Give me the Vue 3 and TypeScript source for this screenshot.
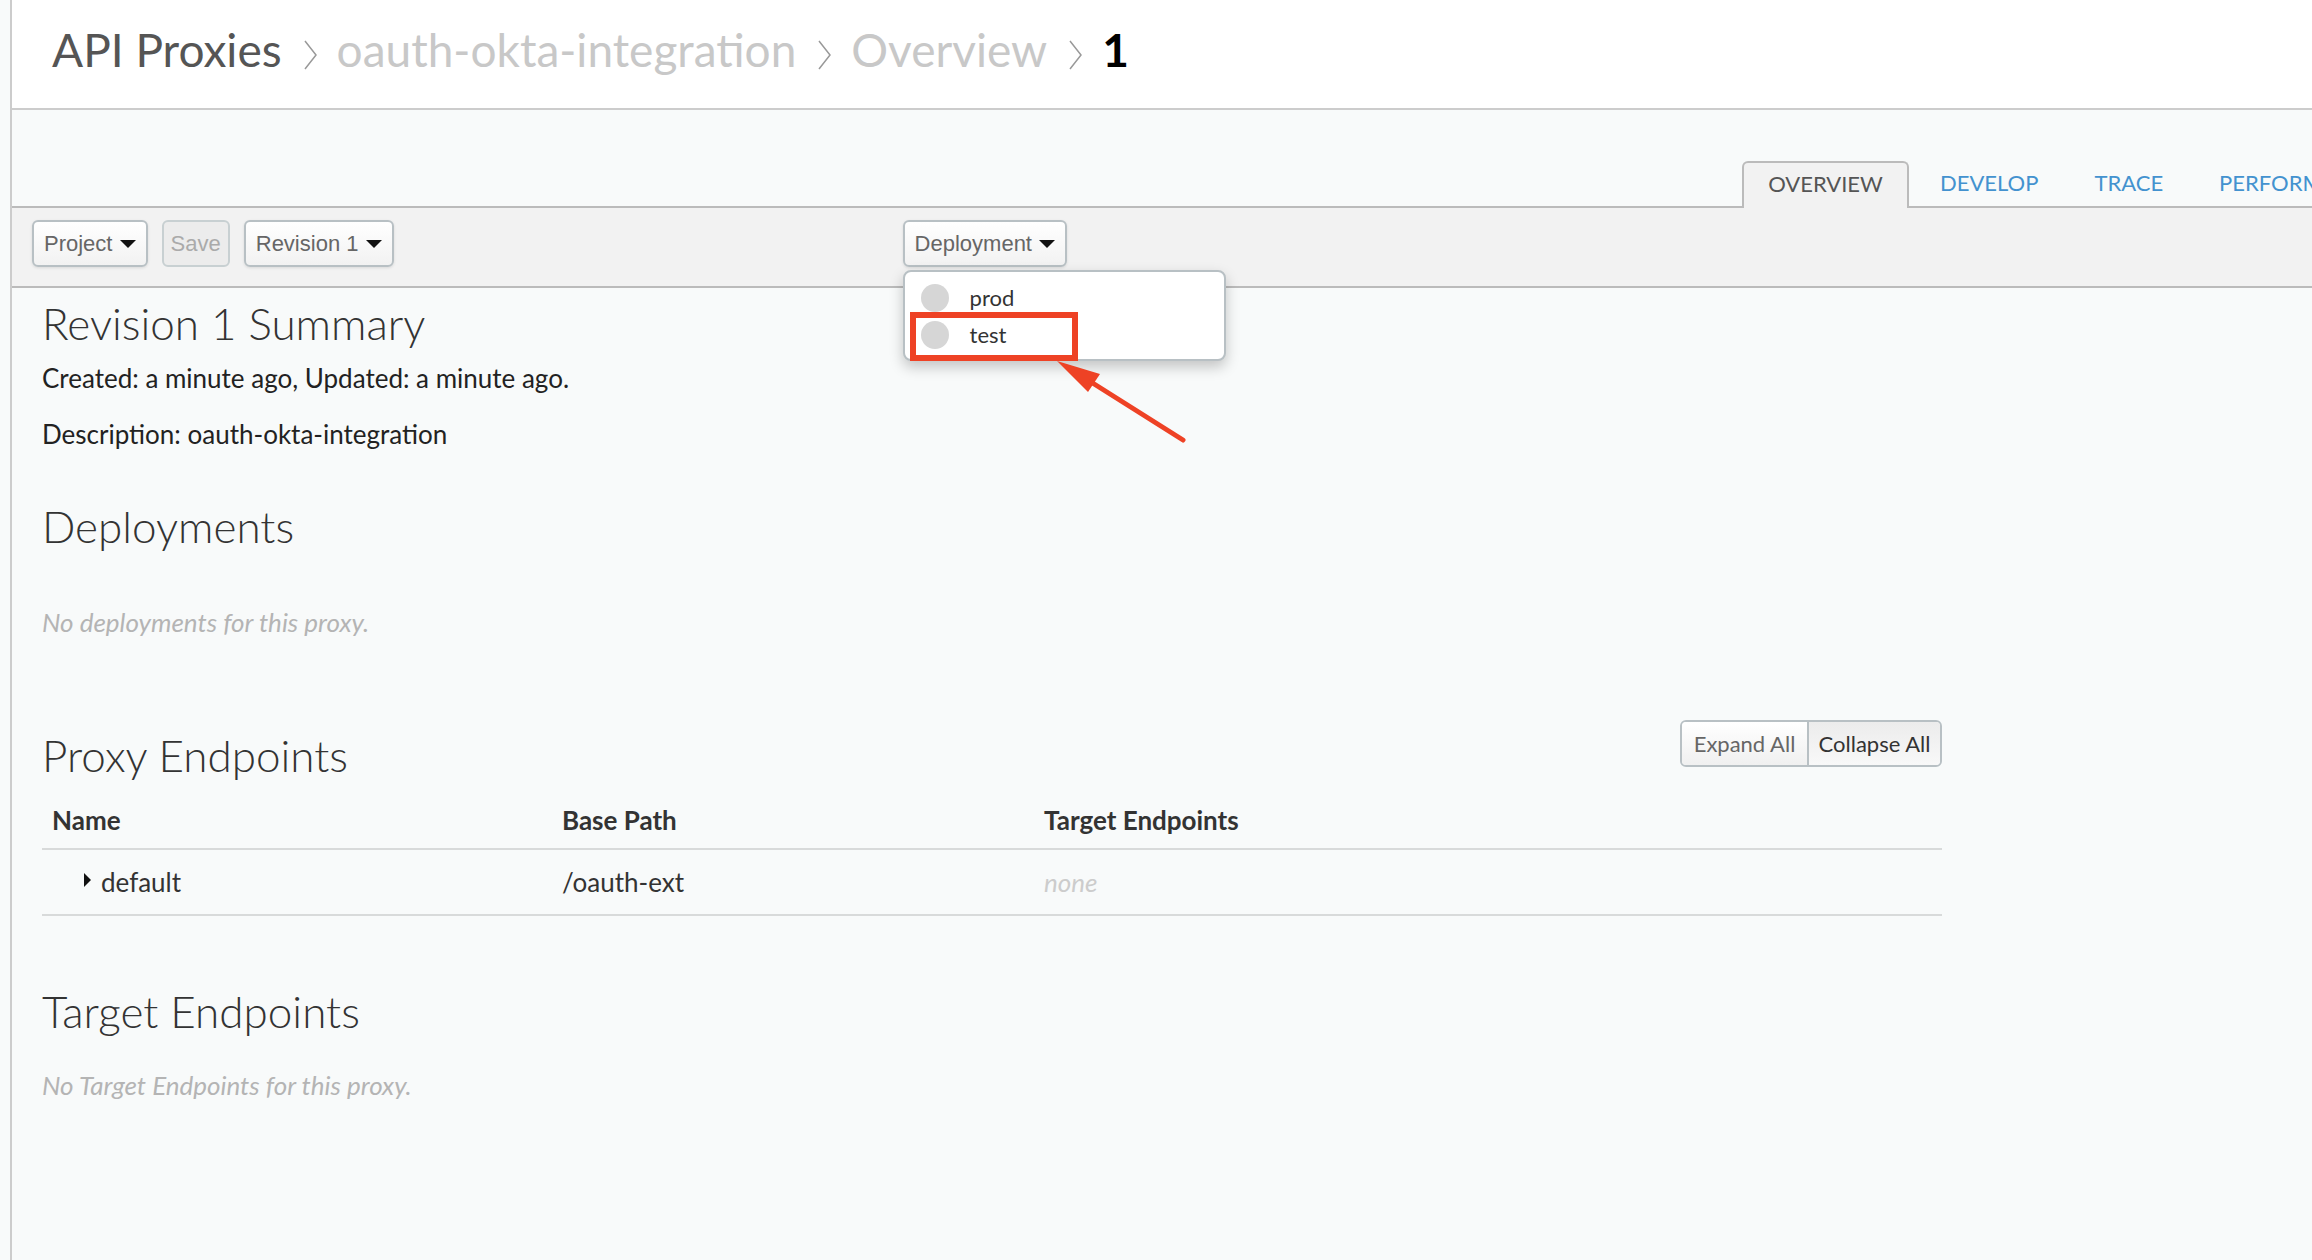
<script setup lang="ts">
const crumbs = ['oauth-okta-integration', 'Overview']
const tabs = ['OVERVIEW', 'DEVELOP', 'TRACE', 'PERFORMANCE']
const environments = ['prod', 'test']
</script>

<template>
  <div class="page">
    <header class="breadcrumb">
      <span class="crumb-root">API Proxies</span>
      <template v-for="crumb in crumbs" :key="crumb">
        <svg class="sep" width="13" height="30" viewBox="0 0 13 30"><path d="M1 1 L12 15 L1 29" fill="none" stroke="#999" stroke-width="1.5" /></svg>
        <span class="crumb">{{ crumb }}</span>
      </template>
      <svg class="sep" width="13" height="30" viewBox="0 0 13 30"><path d="M1 1 L12 15 L1 29" fill="none" stroke="#999" stroke-width="1.5" /></svg>
      <span class="crumb-current">1</span>
    </header>

    <nav class="tabs">
      <a v-for="(tab, i) in tabs" :key="tab" class="tab" :class="{ active: i === 0 }">{{ tab }}</a>
    </nav>

    <div class="toolbar">
      <button class="btn">Project <i class="caret"></i></button>
      <button class="btn disabled">Save</button>
      <button class="btn">Revision 1 <i class="caret"></i></button>
      <div class="deploy">
        <button class="btn">Deployment <i class="caret"></i></button>
        <ul class="menu">
          <li v-for="env in environments" :key="env"><span class="dot"></span>{{ env }}</li>
        </ul>
      </div>
    </div>

    <main class="content">
      <h2 class="summary-title">Revision 1 Summary</h2>
      <p class="meta">Created: a minute ago, Updated: a minute ago.</p>
      <p class="meta desc">Description: oauth-okta-integration</p>

      <h2 class="deploy-title">Deployments</h2>
      <p class="empty deploy-empty">No deployments for this proxy.</p>

      <div class="endpoints-head">
        <h2>Proxy Endpoints</h2>
        <div class="btn-group">
          <button>Expand All</button>
          <button class="dark">Collapse All</button>
        </div>
      </div>
      <div class="table">
        <div class="row head">
          <span class="name">Name</span>
          <span class="path">Base Path</span>
          <span>Target Endpoints</span>
        </div>
        <div class="row body">
          <span class="name"><i class="arrow"></i>default</span>
          <span class="path">/oauth-ext</span>
          <span class="none">none</span>
        </div>
      </div>

      <h2 class="target-title">Target Endpoints</h2>
      <p class="empty target-empty">No Target Endpoints for this proxy.</p>
    </main>

    <!-- annotation drawn over the screenshot -->
    <div class="highlight"></div>
    <svg class="pointer" width="140" height="90" viewBox="0 0 140 90">
      <polygon points="2,1 45,14 33,32" fill="#ee4225" />
      <line x1="36" y1="22" x2="128" y2="80" stroke="#ee4225" stroke-width="5" stroke-linecap="round" />
    </svg>
  </div>
</template>

<style>
html, body {
  margin: 0;
  background: #f8fafa;
}
</style>

<style scoped>
.page {
  position: relative;
  box-sizing: border-box;
  margin-left: 10px;
  width: 2302px;
  height: 1260px;
  border-left: 2px solid #ccc;
  background: #f8fafa;
  overflow: hidden;
  font-family: Lato, "Open Sans", sans-serif;
  color: #333;
}
.breadcrumb {
  display: flex;
  align-items: center;
  box-sizing: border-box;
  height: 110px;
  padding: 0 0 10px 40px;
  background: #fff;
  border-bottom: 2px solid #ccc;
  font-size: 46px;
  white-space: nowrap;
}
.crumb-root {
  color: #555;
}
.crumb {
  color: #c8c8c8;
}
.crumb-current {
  color: #000;
  font-weight: 700;
}
.sep {
  flex-shrink: 0;
  margin: 12px 20px 0 22px;
}
.tabs {
  display: flex;
  align-items: flex-end;
  height: 96px;
  padding-left: 1730px;
  white-space: nowrap;
}
.tab {
  flex-shrink: 0;
  height: 47px;
  line-height: 47px;
  font-size: 22px;
  color: #4392cf;
  margin-right: 56px;
}
.tab.active {
  box-sizing: border-box;
  width: 167px;
  margin-right: 31px;
  line-height: 41px;
  text-align: center;
  color: #555;
  background: #f2f2f2;
  border: 2px solid #bbb;
  border-bottom: 0;
  border-radius: 6px 6px 0 0;
  margin-bottom: -2px;
  position: relative;
}
.toolbar {
  display: flex;
  align-items: flex-start;
  gap: 14px;
  height: 78px;
  padding-left: 20px;
  background: #f2f2f2;
  border-top: 2px solid #bbb;
  border-bottom: 2px solid #bbb;
}
.btn {
  display: block;
  box-sizing: border-box;
  height: 47px;
  margin-top: 12px;
  padding: 0 10px;
  font: 22px "Liberation Sans", Arial, sans-serif;
  color: #666;
  background: linear-gradient(#fff, #f2f2f2);
  border: 2px solid #b8c0c4;
  border-radius: 6px;
  box-shadow: 0 1px 3px rgba(0, 0, 0, 0.1);
  white-space: nowrap;
}
.btn.disabled {
  padding: 0 7px;
  color: #aaa;
  background: #ececec;
  box-shadow: none;
  border-color: #c8d0d2;
}
.caret {
  display: inline-block;
  width: 0;
  height: 0;
  margin-left: 1px;
  vertical-align: 3px;
  border-left: 8px solid transparent;
  border-right: 8px solid transparent;
  border-top: 8px solid #111;
}
.deploy {
  position: relative;
  margin-left: 495px;
}
.menu {
  position: absolute;
  top: 62px;
  left: 0;
  z-index: 2;
  box-sizing: border-box;
  width: 323px;
  height: 91px;
  margin: 0;
  padding: 7px 0 0 16px;
  list-style: none;
  background: #fff;
  border: 2px solid #b8c0c4;
  border-radius: 8px;
  box-shadow: 0 6px 14px rgba(0, 0, 0, 0.22);
  font-size: 22px;
  color: #333;
}
.menu li {
  display: flex;
  align-items: center;
  height: 37px;
}
.dot {
  width: 28px;
  height: 28px;
  margin-right: 21px;
  border-radius: 50%;
  background: #d6d6d6;
}
.content {
  padding: 0 0 0 30px;
}
h2 {
  margin: 0;
  font-weight: 300;
  font-size: 44px;
  line-height: 50px;
  color: #333;
}
p {
  margin: 0;
}
.summary-title {
  margin-top: 10px;
}
.meta {
  font-size: 26px;
  line-height: 32px;
  color: #222;
}
.summary-title + .meta {
  margin-top: 14px;
}
.desc {
  margin-top: 24px;
}
.deploy-title {
  margin-top: 51px;
}
.empty {
  font-style: italic;
  font-size: 26px;
  line-height: 32px;
  color: #b4b4b4;
}
.deploy-empty {
  margin-top: 55px;
}
.endpoints-head {
  display: flex;
  justify-content: space-between;
  align-items: flex-start;
  width: 1900px;
  margin-top: 82px;
}
.endpoints-head h2 {
  margin-top: 10px;
}
.btn-group {
  display: flex;
  height: 47px;
  box-sizing: border-box;
  border: 2px solid #b8c0c4;
  border-radius: 6px;
  overflow: hidden;
}
.btn-group button {
  width: 125px;
  padding: 0;
  border: 0;
  font: 22px Lato, sans-serif;
  color: #666;
  background: linear-gradient(#fff, #f0f0f0);
}
.btn-group button.dark {
  width: 133px;
  color: #333;
  border-left: 2px solid #b8c0c4;
  background: linear-gradient(#ececec, #f8f8f8);
}
.table {
  width: 1900px;
  margin-top: 11px;
  font-size: 26px;
}
.row {
  display: flex;
  align-items: center;
  border-bottom: 2px solid #d8dada;
}
.row span:nth-child(3) {
  flex: 1;
}
.row.head {
  height: 57px;
  font-weight: 700;
  color: #333;
}
.row.body {
  height: 64px;
}
.name {
  width: 510px;
  padding-left: 10px;
}
.body .name {
  display: flex;
  align-items: center;
}
.arrow {
  width: 0;
  height: 0;
  margin: -4px 10px 0 32px;
  border-top: 7px solid transparent;
  border-bottom: 7px solid transparent;
  border-left: 7px solid #111;
}
.path {
  width: 482px;
}
.none {
  font-style: italic;
  color: #ccc;
}
.target-title {
  margin-top: 70px;
}
.target-empty {
  margin-top: 33px;
}
.highlight {
  position: absolute;
  left: 898px;
  top: 312px;
  width: 168px;
  height: 49px;
  box-sizing: border-box;
  border: 6px solid #ee4225;
  z-index: 3;
}
.pointer {
  position: absolute;
  left: 1043px;
  top: 360px;
  z-index: 3;
}
</style>
